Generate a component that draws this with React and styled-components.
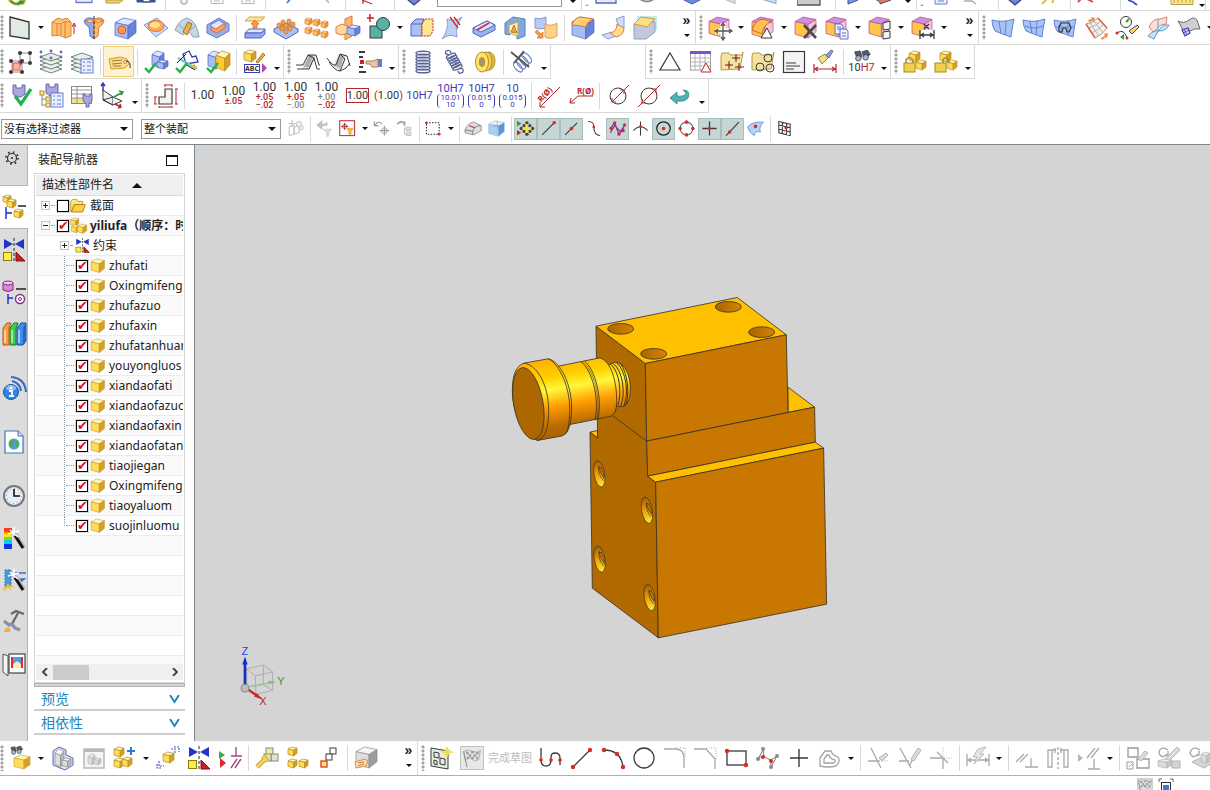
import React from 'react';
import styled, { createGlobalStyle, css } from 'styled-components';

const GlobalStyle = createGlobalStyle`
  * { box-sizing: border-box; }
  body {
    margin: 0;
    background: #fff;
    color: #222;
    font: 12px/16px 'Noto Sans', 'Noto Sans CJK SC', sans-serif;
  }
  button, select, input { font: inherit; color: inherit; margin: 0; }
`;

/* ---------- drawing helpers ---------- */

const GOLD = { top: '#fff6bd', front: '#ffdc58', side: '#d8a020', line: '#b88c24' };
const BLUE = { top: '#dbe6ff', front: '#a5bdf5', side: '#6486da', line: '#5763bc' };
const GREY = { top: '#f6f6f6', front: '#dedede', side: '#b9b9b9', line: '#8c8c8c' };
const PALE = { top: '#ececec', front: '#dcdcdc', side: '#c6c6c6', line: '#b4b4b4' };
const ORANGE = { top: '#ffe2b0', front: '#ffc35c', side: '#f2983a', line: '#e07a35' };
const PURPLE = { top: '#cf8fe0', front: '#ffc648', side: '#f6c6d8', line: '#b8489a' };
const RED = '#b3262c';
const INK = '#3a3a3a';
const MUTE = '#a9a9a9';
const DOT = '#dc2a20';
const NAVY = '#3a3ab8';

const L = ({ d, c = INK, f = 'none', w = 1, dash }) => (
  <path d={d} stroke={c} fill={f} strokeWidth={w} strokeDasharray={dash} />
);

const Cube = ({ x, y, s, h = s, p = GOLD }) => {
  const pt = (...list) =>
    list.map(([a, b]) => `${x + a * s},${y + b * h}`).join(' ');
  return (
    <g stroke={p.line} strokeWidth="0.7" strokeLinejoin="round">
      <polygon fill={p.top} points={pt([0, 0.22], [0.4, 0], [1, 0.12], [0.62, 0.36])} />
      <polygon fill={p.front} points={pt([0, 0.22], [0.62, 0.36], [0.62, 1], [0, 0.82])} />
      <polygon fill={p.side} points={pt([0.62, 0.36], [1, 0.12], [1, 0.7], [0.62, 1])} />
    </g>
  );
};

const Dots = ({ at, r = 1.8, c = DOT }) =>
  at.map(([x, y]) => <circle key={`${x}-${y}`} cx={x} cy={y} r={r} fill={c} />);

const Check = ({ x = 0, y = 0 }) => (
  <path
    transform={`translate(${x} ${y})`}
    d="M0 5 L4 9 L11 0"
    fill="none"
    stroke="#27ae45"
    strokeWidth="2.4"
  />
);

const Binoculars = () => (
  <g stroke="#333" strokeWidth="0.8">
    <path d="M4 2 L10 1 L12 7 L7 10Z M12 2 L18 0 L21 5 L14 8Z" fill="#555c68" />
    <circle cx="8" cy="9" r="3" fill="#9fb6dd" />
    <circle cx="16" cy="8" r="3" fill="#9fb6dd" />
  </g>
);

const Wand = () => (
  <g>
    <path d="M13 8 L22 22" stroke="#bbb" strokeWidth="4.5" />
    <path d="M12 8 L21 22" stroke="#111" strokeWidth="3" />
    <path d="M8 4 L16 11 M12 1 L12 10 M6 8 L17 5" stroke="#fff" strokeWidth="1.6" />
  </g>
);

const Mates = () => (
  <g>
    <path d="M2 1 L11 6 L2 11Z M22 1 L13 6 L22 11Z" fill="#2334c8" />
    <path d="M12 0 V24" stroke="#222" strokeDasharray="3 2" />
    <rect x="1.5" y="14.5" width="8" height="8" fill="#ffee4a" stroke="#8a7a10" />
    <path d="M14 14 L23 23 H14Z" fill="#cc2020" stroke="#7c1010" />
  </g>
);

const Surface = ({ children }) => (
  <g>
    <path d="M1 4 Q12 7 23 3 Q21 12 20 21 Q11 18 4 15 Q1 10 1 4Z" fill="#a9c3f5" stroke="#5f84d4" />
    {children}
  </g>
);

const Layers = () =>
  [19, 15, 11, 7].map((y) => (
    <path
      key={y}
      d={`M1 ${y} L12 ${y - 4} L23 ${y} L12 ${y + 4}Z`}
      fill="#e6efe8"
      stroke="#66786c"
      strokeWidth="0.9"
    />
  ));

const Note = ({ x, y }) => (
  <g transform={`translate(${x} ${y})`} stroke="#5a72cc" strokeWidth="0.9">
    <rect width="12" height="14" fill="#e8efff" />
    <path d="M2 3 H4 M6 3 H10 M2 7 H4 M6 7 H10 M2 11 H4 M6 11 H10" />
  </g>
);

const Pages = ({ x, y }) => (
  <g transform={`translate(${x} ${y})`} stroke="#4a62c4" strokeWidth="0.9" fill="#eef3ff">
    <path d="M0 0 H6 L8 2 V10 H0Z M2 3 H6 M2 5 H6" />
    <path d="M5 5 H11 L13 7 V15 H5Z M7 9 H11 M7 12 H11" />
  </g>
);

const Bolt = () => (
  <path d="M5 1 H8 V4 H14 V1 H17 V10 L13 13 H9 L5 10Z" fill="#a9a8dd" stroke="#6a66b4" />
);

const Fold = () => (
  <path d="M1 6 L2 3 H9 L10 5 H22 L23 2 L20 19 L1 20Z" fill="#f6e2a0" stroke="#b49a48" />
);

const Flag = () => (
  <g>
    <path d="M2 4 Q8 1 13 4 T22 3 L20 14 Q15 17 11 13 T4 15Z" fill="#e4e4e4" stroke="#a4a4a4" />
    <path
      d="M5 6 H8 M11 5 H14 M17 6 H20 M8 9 H11 M14 9 H17 M6 12 H8 M11 12 H14 M17 12 H19"
      stroke="#999"
      strokeWidth="3"
    />
    <path d="M2 4 L6 23" stroke="#999" strokeWidth="1.5" />
  </g>
);

const icons = {
  plane: <L d="M2 1 L21 6 V23 L2 20Z" f="#e2ebe2" c="#333" w={1.3} />,
  extrude: (
    <g>
      <L d="M1 6 L7 2 Q11 5 16 2 L20 6 V20 L14 22 Q9 18 1 20Z" f="#ffc067" c="#dd8038" />
      <L d="M1 6 Q9 9 13 6 L20 6" f="#ffe0a6" c="#dd8038" />
      <L d="M6 8 V20 M10 8 V19 M14 6 V21" c="#dd8038" />
      <L d="M23 18 V8 M21 11 L23 7 L25 11" c={RED} />
    </g>
  ),
  revolve: (
    <g>
      <L d="M12 3 Q5 0 2 5 Q3 9 7 11 L8 20 L12 23Z" f="#8eaaf0" c="#5f74c8" />
      <L d="M12 3 Q20 0 22 5 Q21 9 17 11 L16 20 L12 23Z" f="#ffb763" c="#d87838" />
      <L d="M3 5 Q8 2 12 5 Q17 2 21 5 Q17 7 12 6 Q7 7 3 5Z" f="#ffe0a6" c="#d87838" />
      <L d="M12 0 V24" c="#333" dash="3 2" />
    </g>
  ),
  block: (
    <g>
      <Cube x={2} y={2} s={21} p={BLUE} />
      <circle cx="9" cy="14" r="4" fill="#ff9a48" stroke="#d05a28" />
    </g>
  ),
  emboss: (
    <g>
      <L d="M0 9 L13 2 L24 12 L12 21Z" f="#c8dcff" c="#7a9ad8" />
      <ellipse cx="12" cy="10" rx="8" ry="5.5" fill="#ffa75a" stroke="#e07a35" />
      <ellipse cx="11" cy="9" rx="5" ry="3" fill="#ffe48a" />
    </g>
  ),
  sheet: (
    <g>
      <L d="M0 14 Q4 4 12 2 Q22 5 24 21 L18 21 Q13 12 8 19Z" f="#c7d6e4" c="#8fa0b0" />
      <L d="M13 6 L17 8 L12 19 L8 16Z" f="#f0b348" c="#9a6c24" />
      <L d="M4 9 L10 14 M20 10 L15 14" c="#8fa0b0" />
    </g>
  ),
  shell: (
    <g>
      <L d="M1 9 L13 2 L23 8 V15 L11 22 L1 17Z" f="#93b0ee" c="#5f7acc" />
      <L d="M4 9 L13 4 L20 9 L11 15Z" f="#dce6ff" c="#5f7acc" />
      <L d="M5 11 L10 13 L19 7 V12 L11 17 L5 14Z" f="#ffa25a" c="#e06a35" />
    </g>
  ),
  offsetFace: (
    <g>
      <L d="M6 1 H22 L18 5 H2Z" f="#ffe48c" c="#d0a848" />
      <path d="M10 12 V8 H8 L12 4 L16 8 H14 V12Z" fill="#ff9b3c" stroke="#d86a28" strokeWidth="0.8" />
      <L d="M6 13 H22 L18 17 H2Z" f="#dbe6ff" c={BLUE.line} />
      <L d="M2 17 H18 L22 13 V18 L18 22 H2Z" f="#8fa9f0" c={BLUE.line} />
    </g>
  ),
  pattern: (
    <g>
      <L d="M0 13 L12 7 L24 13 V16 L12 23 L0 16Z" f="#a9c0f5" c={BLUE.line} />
      {[[8, 6], [14, 5], [4, 9], [11, 9], [18, 8], [7, 12], [15, 12], [11, 15]].map(([x, y]) => (
        <rect key={`${x}-${y}`} x={x - 1} y={y - 2} width="4" height="5" rx="2" fill="#f5a04a" stroke="#c0702a" strokeWidth="0.7" />
      ))}
    </g>
  ),
  geometryPattern: (
    <g>
      {[[0, 2], [8, 3], [16, 5], [0, 11], [8, 13], [16, 15]].map(([x, y]) => (
        <Cube key={`${x}-${y}`} x={x} y={y} s={7} p={ORANGE} />
      ))}
    </g>
  ),
  unite: (
    <g>
      <L d="M9 3 L16 0 V20 L9 24Z" f="#ffb767" c="#e07a35" />
      <L d="M0 11 L6 8 L12 10 V17 L5 19 L0 17Z" f="#ffd9a0" c="#e07a35" />
      <Cube x={11} y={9} s={13} h={11} p={BLUE} />
    </g>
  ),
  combine: (
    <g>
      <rect x="3" y="10" width="12" height="12" fill="#56b3a4" stroke={INK} />
      <circle cx="16" cy="8" r="6.5" fill="#56b3a4" stroke={INK} />
      <L d="M0 2 H7 M3 -2 V6" c="#d02020" w={1.5} />
    </g>
  ),
  replaceFace: (
    <g>
      <L d="M1 8 L6 3 H14 L12 8 V20 H1Z" f="#a9c0f5" c={BLUE.line} />
      <L d="M12 8 L15 3 H23 V15 L20 20 H12Z" f="#fde88e" c="#d02020" dash="2 1" />
      <L d="M1 8 H12" c={BLUE.line} />
    </g>
  ),
  trimSheet: (
    <g>
      <L d="M6 3 Q14 6 21 1 Q14 10 16 21 Q8 17 1 23 Q8 14 6 3Z" f="#bcd0f8" c="#84a0d8" />
      <L d="M9 1 L17 12 M13 1 L19 9" c="#d02828" w={1.3} />
    </g>
  ),
  splitBody: (
    <g>
      <L d="M1 12 L15 5 L23 9 V14 L9 21 L1 17Z" f="#9ab4f0" c={BLUE.line} />
      <L d="M1 12 L15 5 L23 9 L9 16Z" f="#dbe6ff" c={BLUE.line} />
      <L d="M17 7 L5 14" c="#d02828" w={1.5} />
    </g>
  ),
  wave: (
    <g>
      <L d="M2 7 L10 1 L22 3 V20 L14 23 V15 H7 V19 L2 18Z" f="#7faade" c="#5a80b4" />
      <L d="M6 9 L15 6 V20 L6 17Z" f="#fff0bd" c="#d0a048" />
      <L d="M8 16 L11 9 L14 17Z" f="#e7a43c" c="#b88030" />
    </g>
  ),
  copyFace: (
    <g>
      <L d="M1 2 Q6 4 12 1 V12 Q6 14 1 12Z" f="#b6caf7" c="#8098d4" />
      <L d="M11 8 Q17 11 23 7 V20 Q17 24 11 21Z" f="#ffd384" c="#e0a050" />
      <path d="M3 14 L7 18 L9 16 V22 H3 L5 20 L1 16Z" fill="#ff9b3c" stroke="#d86a28" strokeWidth="0.7" />
    </g>
  ),
  edgeBlend: (
    <g>
      <Cube x={1} y={1} s={22} p={BLUE} />
      <L d="M1 9 Q3 2 9 1 L23 3 Q16 5 15 11 Q8 9 1 9Z" f="#ffd070" c="#d87838" />
    </g>
  ),
  faceBlend: (
    <g>
      <L d="M14 3 L22 0 V12 L18 14Z" f="#c8dcff" c="#84a0d8" />
      <L d="M0 19 L10 16 L14 20 L6 23Z" f="#c8dcff" c="#84a0d8" />
      <L d="M15 8 Q15 16 8 17 L14 21 Q22 19 22 12Z" f="#ffe08a" c="#e07a45" />
    </g>
  ),
  chamfer: (
    <g>
      <rect x="4" y="0" width="20" height="14" fill="#b8f0f0" />
      <L d="M1 8 L8 5 L22 6 V16 L13 23 H1Z" f="#bfc9da" c="#94a0b8" />
      <L d="M1 8 L8 1 L22 3 L14 11Z" f="#ffdd80" c="#dd9048" />
    </g>
  ),
  moveFace: (
    <g>
      <Cube x={1} y={1} s={20} p={PURPLE} />
      <path d="M15 7 V23 M7 15 H23" stroke="#fff" strokeWidth="5" />
      <L d="M15 7 V23 M7 15 H23 M13 10 L15 7 L17 10 M13 21 L15 24 L17 21 M10 13 L7 15 L10 17 M21 13 L24 15 L21 17" c="#555" w={1.3} />
    </g>
  ),
  resizeBlend: (
    <g>
      <Cube x={1} y={1} s={21} p={PURPLE} />
      <L d="M1 14 Q4 4 12 3 L21 6 Q13 7 11 18Z" f="#ffc250" c="#d0603a" />
      <L d="M10 22 L16 12 L21 22Z" f="#fff" />
    </g>
  ),
  deleteFace: (
    <g>
      <Cube x={1} y={1} s={21} p={PURPLE} />
      <L d="M10 9 L22 22 M22 9 L10 22" w={2.6} c="#4a4a4a" />
    </g>
  ),
  copyCube: (
    <g>
      <Cube x={1} y={1} s={20} p={PURPLE} />
      <Pages x={10} y={8} />
    </g>
  ),
  groupFace: (
    <g>
      <Cube x={1} y={1} s={20} p={PURPLE} />
      <L d="M15 7 L22 5 V13 L15 14Z M15 16 L22 15 V22 L15 23Z" f="#f4f4f4" />
    </g>
  ),
  linearDim: (
    <g>
      <Cube x={1} y={1} s={20} p={PURPLE} />
      <path d="M9 14 H24 V24 H9Z" fill="#fff" />
      <L d="M9 14 V23 M23 14 V23 M10 19 H22 M13 17 L10 19 L13 21 M19 17 L22 19 L19 21 M13 8 L18 13 M18 8 L13 13" w={1.3} />
    </g>
  ),
  surf1: (
    <Surface>
      <L d="M8 5 Q9 12 10 17 M15 5 Q15 12 14 19" c="#5f84d4" />
    </Surface>
  ),
  surf2: (
    <Surface>
      <L d="M8 5 Q9 12 10 17 M15 5 Q15 12 14 19 M3 10 Q12 14 21 10" c="#5f84d4" />
    </Surface>
  ),
  surf3: (
    <Surface>
      <L d="M8 5 V18 M15 4 V19 M3 11 H21" c="#5f84d4" w={0.8} />
      <L d="M8 7 H16 L18 12 L16 16 H14 L13 12 H10 L9 16 H6 V11Z" c="#333" w={1.2} />
    </Surface>
  ),
  mesh: (
    <g>
      <L d="M2 8 Q9 7 14 2 L23 12 Q18 19 11 22Z" f="#f4efe8" c="#9a9a9a" />
      <L d="M5 12 Q12 10 17 5 M8 17 Q14 14 20 8 M6 7 L15 20 M10 5 L19 17" c="#a8a8a8" w={0.9} />
      <L d="M2 8 L11 22 M14 2 L23 12" c="#e0603a" w={1.4} />
      <path d="M4 4 L8 3 L7 1 L11 2 L9 6 L8 5 L5 6Z M17 22 L21 20 L20 18 L24 17 L23 22 L22 21 L18 24Z" fill="#f08838" />
    </g>
  ),
  curveLink: (
    <g>
      <circle cx="11" cy="6" r="5.5" fill="none" stroke={INK} />
      <L d="M11 6 L14 3" c="#2a9a3a" w={2} />
      <L d="M2 17 Q9 12 12 22" />
      <Dots at={[[2, 17], [12, 22]]} r={1.5} />
      <L d="M14 15 L22 9 L24 11 L17 18Z" f="#ffdc58" c={NAVY} />
      <path d="M5 21 L9 18 V24Z" fill="#2a9a3a" />
    </g>
  ),
  crossSurf: (
    <g>
      <L d="M3 11 Q7 2 14 3 L21 1 L20 8 Q12 8 8 17Z" f="#f9dede" c="#e07a74" />
      <L d="M2 20 Q8 13 14 15 Q20 15 23 9 L18 9 Q13 12 8 23Z" f="#c8e2f4" c="#5f94d0" />
      <L d="M12 3 V16" c="#4fb0a0" />
    </g>
  ),
  quilt: (
    <g>
      <L d="M1 5 Q7 8 12 4 Q17 0 20 4 L23 13 Q17 12 13 15 Q8 18 6 14Z" f="#cfcfcf" c="#6a6a6a" />
      <L d="M5 14 L11 12 L13 17 L8 20Z" f="#cfd8ff" c={NAVY} w={1.2} />
      <L d="M7 13 L10 19 M6 17 L12 14" c={NAVY} w={0.8} />
    </g>
  ),
  selGroup: (
    <g>
      <L d="M12 3 H22 V13 H12Z M4 11 H14 V22 H4Z" c="#8b8b8b" />
      <Dots at={[[12, 3], [22, 3], [22, 13], [12, 13], [3, 11], [14, 11], [14, 22], [3, 22]]} r={2} c={INK} />
      <rect x="5" y="13" width="7" height="7" fill="#ffb0a0" stroke="#e05040" />
    </g>
  ),
  layers: (
    <g>
      <Layers />
      <Dots at={[[2, 2], [12, 1], [22, 2], [12, 8], [2, 7], [22, 7]]} r={1.4} c="#6a66b4" />
    </g>
  ),
  layersList: (
    <g>
      <Layers />
      <Note x={11} y={9} />
    </g>
  ),
  tag: (
    <g>
      <L d="M2 9 L13 7 L20 9 L22 14 L18 18 L4 19Z" f="#ffdd84" c="#d09a38" />
      <L d="M5 11 L15 10 M5 14 L15 13 M6 16 L14 16" c="#9a7a38" />
      <circle cx="18" cy="12" r="1.5" fill="#fff" stroke="#9a7a38" strokeWidth="0.8" />
      <L d="M19 11 Q24 11 23 18" c="#333" />
    </g>
  ),
  checkBlue: (
    <g>
      <Cube x={8} y={1} s={12} h={17} p={BLUE} />
      <Cube x={13} y={10} s={11} h={9} p={BLUE} />
      <Check x={1} y={13} />
    </g>
  ),
  checkSketch: (
    <g>
      <L d="M8 4 L14 1 L17 7 L21 6 L23 12 L11 14Z" c={NAVY} w={1.3} />
      <L d="M3 8 L22 19" c="#75c9c6" w={2.5} />
      <L d="M2 13 L11 4 M10 14 L20 20" c="#222" />
      <L d="M18 15 L21 18" c="#f0b030" w={3} />
      <Check x={1} y={13} />
    </g>
  ),
  checkBody: (
    <g>
      <Cube x={2} y={1} s={13} h={18} p={BLUE} />
      <Cube x={10} y={1} s={14} h={20} p={{ ...GOLD, front: '#ffc935' }} />
      <Check x={1} y={13} />
    </g>
  ),
  abc: (
    <g>
      <Cube x={1} y={0} s={12} />
      <L d="M13 12 L20 3 L22 5 L15 13Z" f="#f0b030" c="#8a5c14" w={0.8} />
      <rect x="1.5" y="14.5" width="15" height="8" fill="#fff" stroke={NAVY} />
      <text x="9" y="21" textAnchor="middle" fontSize="7" fontWeight="700" fill="#333">ABC</text>
      <path d="M19 13 L24 18 L19 23Z" fill="#b346b8" />
    </g>
  ),
  bridge1: (
    <g>
      <path d="M6 19 L12 5 L20 5 L14 19Z" fill="#dadada" />
      <path d="M8 17 L13 5 L17 6 L13 17Z" fill="#aeaeae" />
      <L d="M0 15 H7 L12 5 H20 L23 15 H24 M1 19 H13 L18 8 L21 19 H24 M12 5 L18 8" />
    </g>
  ),
  bridge2: (
    <g>
      <path d="M6 17 L12 4 L19 5 L13 20Z" fill="#dadada" />
      <path d="M9 16 L13 5 L17 7 L13 18Z" fill="#aeaeae" />
      <L d="M0 8 Q5 16 9 15 L13 4 L20 6 L23 16 M2 12 Q8 21 13 21 Q20 19 23 13 M13 21 L18 9 M13 4 L18 9" />
    </g>
  ),
  pointList: (
    <g>
      <L d="M1 2 H7 M1 7 H5 M1 17 H5 M1 22 H8" w={2} />
      <rect x="2" y="10" width="4" height="4" fill="#d02020" />
      <L d="M8 11 H15 L20 9 V17 H14 L12 14 H8Z" f="#f2c69a" c="#b08060" />
      <rect x="20" y="9" width="4" height="8" fill="#6a7cc4" />
    </g>
  ),
  coil: (
    <g fill="none" stroke="#5a6494" strokeWidth="1.5">
      {[3, 6, 9, 12, 15, 18, 21].map((y) => (
        <ellipse key={y} cx="12" cy={y} rx="7" ry="1.8" />
      ))}
    </g>
  ),
  tension: (
    <g fill="none" stroke="#5a6494" strokeWidth="1.3">
      {[0, 1, 2, 3, 4, 5].map((i) => (
        <ellipse key={i} cx={9 + i * 1.3} cy={6 + i * 2.3} rx="5" ry="1.8" transform={`rotate(-25 ${9 + i * 1.3} ${6 + i * 2.3})`} />
      ))}
      <path d="M7 5 Q2 4 4 1 Q8 -1 9 3 M17 19 Q22 17 21 22 Q17 25 16 21" />
    </g>
  ),
  wheel: (
    <g stroke="#b08c28">
      <ellipse cx="16" cy="11" rx="6" ry="9" fill="#e6bc3c" />
      <ellipse cx="13" cy="11.5" rx="6" ry="9.5" fill="#f3cf4c" />
      <ellipse cx="9" cy="12" rx="6.5" ry="10" fill="#ffe46e" />
      <ellipse cx="9" cy="12" rx="2.5" ry="4.5" fill="#a8986a" />
    </g>
  ),
  cutCoil: (
    <g fill="none">
      {[0, 1, 2, 3].map((i) => (
        <ellipse key={i} cx={8 + i * 3} cy={17 - i * 3} rx="3" ry="6" stroke="#6f88c4" strokeWidth="1.3" transform={`rotate(-40 ${8 + i * 3} ${17 - i * 3})`} />
      ))}
      <path d="M1 2 L19 17 M14 1 L4 13" stroke="#555" strokeWidth="1.8" />
    </g>
  ),
  triangle: <L d="M12 3 L22 20 H2Z" w={1.2} />,
  tableTri: (
    <g>
      <rect x="1.5" y="2" width="20" height="18" fill="#fff" stroke="#9c9c9c" />
      <L d="M1 8 H22 M1 12 H22 M1 16 H22 M6 4 V20 M11 4 V20 M16 4 V20" c="#ababab" w={0.9} />
      <rect x="1" y="1" width="21" height="3" fill="#7b52cc" />
      <L d="M17 13 L22 22 H12Z" c="#d02020" f="#fff" />
    </g>
  ),
  folderPts: (
    <g>
      <Fold />
      <L d="M16 4 V12 M12 8 H20 M9 11 V19 M5 15 H13 M19 13 V21 M15 17 H24" />
      <Dots at={[[16, 8], [9, 15], [19, 17]]} r={1.5} />
    </g>
  ),
  folderRings: (
    <g fill="none" stroke={INK}>
      <Fold />
      <circle cx="17" cy="8" r="4" />
      <circle cx="9" cy="17" r="4" />
      <circle cx="19" cy="18" r="4" />
    </g>
  ),
  noteBox: (
    <g>
      <rect x="1.5" y="1.5" width="21" height="21" fill="#f4f4f4" stroke={INK} strokeWidth="1.2" />
      <L d="M4 13 H14 M4 16 H18 M4 19 H12" />
    </g>
  ),
  brushDim: (
    <g>
      <L d="M5 8 L12 4 L15 8 L9 14Z" f="#f0dc8a" c="#9a8a48" />
      <L d="M13 5 L18 0 L20 1 L16 8Z" f="#8fa2d0" c="#6474a4" />
      <L d="M1 14 V23 M23 14 V23 M2 19 H22 M5 17 L2 19 L5 21 M19 17 L22 19 L19 21" c={RED} w={1.2} />
    </g>
  ),
  locks1: (
    <g>
      <Cube x={6} y={1} s={11} />
      <Cube x={13} y={10} s={10} />
      <rect x="1" y="13" width="11" height="9" fill="#f0d04c" stroke="#a08c24" />
      <L d="M3 13 V10 Q6 5 10 10 V13" c="#a08c34" w={1.6} />
    </g>
  ),
  locks2: (
    <g>
      <Cube x={6} y={1} s={11} />
      <Cube x={13} y={10} s={10} />
      <rect x="1" y="13" width="11" height="9" fill="#f0d04c" stroke="#a08c24" />
      <L d="M9 13 V10 Q12 5 15 10 V13" c="#a08c34" w={1.6} />
    </g>
  ),
  pmiCheck: (
    <g>
      <Bolt />
      <L d="M7 12 L13 20 L23 5" c="#23b14d" w={3.2} />
    </g>
  ),
  pmiTree: (
    <g>
      <g transform="translate(2 -1)">
        <Bolt />
      </g>
      <L d="M3 10 V22 M3 15 H8 M3 21 H8" c="#888" />
      <rect x="1" y="7" width="4" height="4" fill="#ffe98c" stroke="#b88c24" />
      <rect x="7" y="13" width="4" height="4" fill="#ffe98c" stroke="#b88c24" />
      <rect x="7" y="19" width="4" height="4" fill="#ffe98c" stroke="#b88c24" />
      <Note x={12} y={9} />
    </g>
  ),
  pmiTable: (
    <g>
      <rect x="1.5" y="2.5" width="20" height="17" fill="#fff" stroke="#888" />
      <path d="M2 14 H14 V19 H2Z" fill="#f5e58e" />
      <L d="M1 6 H22 M1 10 H22 M1 14 H22 M7 2 V20" c="#888" w={0.9} />
      <L d="M13 10 H15 V12 H20 V10 H22 V17 L19 19 V23 H16 V19 L13 17Z" f="#a9a8dd" c="#6a66b4" />
    </g>
  ),
  csys: (
    <g>
      <L d="M2 6 L12 13 V21 L2 16Z" f="#eef2ee" />
      <L d="M12 13 L21 17 L12 21 M2 16 L12 13 M12 21 L2 16" f="#eef2ee" />
      <L d="M2 7 V0 M0 2 L2 -1 L4 2" c={NAVY} w={1.5} />
      <L d="M13 13 L22 8 M18 7 L22 8 L20 11" c="#1f9a44" w={1.5} />
      <L d="M14 20 L20 23 M17 24 L20 23 L19 20" c={RED} w={1.5} />
    </g>
  ),
  profile: (
    <g>
      <path d="M5 20 V13 H11 V5 H18 V20Z" fill="#f4f4f4" stroke={INK} strokeWidth="1.2" />
      <L d="M11 1 H18 M11 0 V3 M18 0 V3 M1 13 V20 M0 13 H3 M0 20 H3 M22 5 V20 M21 5 H24 M21 20 H24 M5 23 H18 M5 22 V24 M18 22 V24" c={RED} />
    </g>
  ),
  radius1: (
    <g>
      <L d="M22 3 L2 23 M2 18 V23 H7" c={RED} />
      <text x="8" y="12" fontSize="8" fontWeight="700" fill={RED} textAnchor="middle" transform="rotate(-45 9 11)">R(Ø)</text>
    </g>
  ),
  radius2: (
    <g>
      <L d="M24 12 H9 L1 19 M2 14 L1 19 L6 19" c={RED} />
      <text x="8" y="10" fontSize="8" fontWeight="700" fill={RED}>R(Ø)</text>
    </g>
  ),
  dia1: (
    <g>
      <circle cx="12" cy="12" r="8" fill="none" stroke={INK} />
      <L d="M23 1 L6 18 M6 14 V18 H10 M18 10 V6 H14" c={RED} />
    </g>
  ),
  dia2: (
    <g>
      <circle cx="12" cy="12" r="8" fill="none" stroke={INK} />
      <L d="M23 1 L1 23 M5 15 V19 H9 M19 9 V5 H15" c={RED} />
    </g>
  ),
  back: (
    <path d="M2 14 L9 8 V12 Q17 13 18 9 L15 6 Q23 6 20 14 Q17 18 9 17 V20Z" fill="#4fb0b0" stroke="#30888a" strokeWidth="0.8" />
  ),

  /* selection bar */
  selCube: (
    <g>
      <L d="M3 10 L10 7 V20 L3 22Z M10 10 L17 8 V18 L10 20Z M7 0 V10 M2 5 H12" c="#b8b8b8" w={1.3} />
      <circle cx="17" cy="6" r="4" stroke="#b8b8b8" fill="#eee" />
      <circle cx="20" cy="11" r="3" stroke="#b8b8b8" fill="#eee" />
    </g>
  ),
  filterBack: (
    <g>
      <L d="M2 7 L8 2 V12Z M8 7 H15 V3" c="#bbb" f="#ccc" w={2} />
      <L d="M10 13 H22 L18 18 V23 H15 V18Z" c="#ccc" f="#ddd" />
    </g>
  ),
  filterBox: (
    <g>
      <rect x="1" y="1" width="21" height="21" fill="#fff" stroke="#c4303a" strokeWidth="1.5" />
      <L d="M8 4 V14 M3 9 H13" c={RED} w={1.3} />
      <circle cx="8" cy="9" r="3" fill="none" stroke={RED} />
      <L d="M11 12 H20 L17 16 V20 H14 V16Z" c="#d8a020" f="#f0b848" />
    </g>
  ),
  targetBack: (
    <g>
      <L d="M3 7 Q8 0 13 6 M2 2 V8 H8" c="#999" w={1.6} />
      <circle cx="16" cy="15" r="4" fill="none" stroke="#888" w={1.3} />
      <L d="M16 8 V22 M9 15 H23" c="#888" w={1.3} />
    </g>
  ),
  treeBack: (
    <g>
      <L d="M2 6 Q6 0 12 5 M12 2 V8" c="#aaa" w={3} />
      <L d="M12 10 V20 H16 M12 13 H16" c="#bbb" w={1.3} />
      <rect x="15" y="10" width="6" height="5" fill="#ddd" stroke="#bbb" />
      <rect x="15" y="17" width="6" height="5" fill="#ddd" stroke="#bbb" />
    </g>
  ),
  marquee: (
    <g>
      <rect x="2" y="4" width="18" height="16" fill="none" stroke="#222" strokeWidth="1.5" strokeDasharray="2 2" />
      <Dots at={[[2, 4], [20, 20]]} r={2} />
    </g>
  ),
  shadeTop: (
    <g>
      <L d="M0 14 Q4 4 12 3 L23 8 V15 L12 21 L0 18Z" f="#e0e0e0" c="#777" />
      <L d="M0 14 L11 16 Q13 8 22 8 M11 16 V21" c="#777" w={1.3} />
      <L d="M6 8 L14 11" c="#d02020" w={1.6} />
    </g>
  ),
  glass: (
    <g>
      <Cube x={1} y={1} s={22} p={{ top: '#dff2ff', front: '#a5d0f5', side: '#5a96dc', line: '#8ab0dc' }} />
      <L d="M13 2 V12 M7 8 H19" c="#e06060" dash="2 1" />
    </g>
  ),
  snapAll: (
    <g>
      <path d="M0 1 L6 5 L0 9Z" fill="#2a9a3a" />
      <path d="M0 14 L6 18 L0 22Z" fill="#d02020" />
      <Dots at={[[14, 4], [22, 12], [14, 20], [6, 12], [10, 8], [18, 8], [10, 16], [18, 16]]} r={2.4} c="#444" />
      <Dots at={[[14, 8], [18, 12], [14, 16], [10, 12], [14, 12]]} r={2.2} c="#f0e43c" />
    </g>
  ),
  snapEnd: (
    <g>
      <L d="M3 21 L20 4" w={1.6} />
      <Dots at={[[20, 4]]} r={2.5} />
    </g>
  ),
  snapMid: (
    <g>
      <L d="M3 21 L20 4" w={1.6} />
      <Dots at={[[12, 12]]} r={2.5} />
    </g>
  ),
  snapCurve: (
    <g>
      <L d="M3 2 Q12 2 11 11 Q12 22 20 22" w={1.5} />
      <Dots at={[[11, 10]]} r={2} />
    </g>
  ),
  snapPoly: (
    <g>
      <L d="M2 12 L8 4 L14 20 L21 12 M2 18 L8 8 L16 16 L22 8" c="#8232a8" w={1.8} />
      <Dots at={[[3, 12], [8, 4], [14, 20], [22, 7], [20, 15]]} r={2.3} />
    </g>
  ),
  snapCross: (
    <g>
      <L d="M2 15 Q12 4 22 15 M12 2 V22" w={1.5} />
      <Dots at={[[12, 9]]} r={2} />
    </g>
  ),
  snapCenter: (
    <g>
      <circle cx="12" cy="12" r="9.5" fill="none" stroke="#222" strokeWidth="1.8" />
      <Dots at={[[12, 12]]} r={2.5} />
    </g>
  ),
  snapQuad: (
    <g>
      <circle cx="12" cy="12" r="9" fill="none" stroke="#666" strokeWidth="1.5" />
      <Dots at={[[12, 3], [12, 21], [3, 12], [21, 12]]} r={2.5} />
    </g>
  ),
  snapPoint: (
    <g>
      <L d="M12 2 V22 M2 12 H22" w={1.8} />
      <Dots at={[[12, 12]]} r={2} />
    </g>
  ),
  snapOn: (
    <g>
      <L d="M3 22 L21 3" w={1.6} />
      <Dots at={[[8, 17]]} r={2.5} />
    </g>
  ),
  snapFace: (
    <g>
      <L d="M1 10 Q6 2 23 3 Q16 10 19 17 Q12 14 10 22 Q3 18 1 10Z" f="#b4d2f5" c="#6b98d0" w={1.3} />
      <Dots at={[[12, 9]]} r={2.5} />
    </g>
  ),
  grid: (
    <g>
      <L d="M4 2 L20 6 V22 L4 18Z M9 3 V19 M15 5 V21 M4 7 L20 11 M4 13 L20 17" w={1.5} />
      <Dots at={[[14, 11]]} r={2.2} />
    </g>
  ),

  /* resource rail */
  gear: (
    <g fill="none" stroke="#333">
      <circle cx="12" cy="12" r="6" strokeWidth="1.6" />
      <circle cx="12" cy="12" r="8" strokeWidth="2.4" strokeDasharray="2.2 4.1" />
      <circle cx="12" cy="12" r="1" fill="#333" />
    </g>
  ),
  assembly: (
    <g>
      <Cube x={1} y={0} s={8} />
      <Cube x={5} y={4} s={9} />
      <L d="M16 11 H24" c="#111" w={1.4} />
      <L d="M4 12 V24 M4 18 H10" c="#1a28c0" w={1.4} />
      <Cube x={12} y={14} s={9} />
    </g>
  ),
  constraints: <Mates />,
  partNav: (
    <g>
      <path d="M1 3 V10 Q6 13 11 10 V3" fill="#d68ad0" stroke="#8a2a86" />
      <ellipse cx="6" cy="3" rx="5" ry="2" fill="#f2c8ee" stroke="#8a2a86" />
      <L d="M14 9 H24" c="#111" w={1.4} />
      <L d="M6 14 V24 M6 18 H11" c="#1a28c0" w={1.4} />
      <circle cx="18" cy="19" r="4.5" fill="#fff" stroke="#8a2a86" strokeWidth="1.4" />
      <circle cx="18" cy="19" r="1.5" fill="#fff" stroke="#8a2a86" />
    </g>
  ),
  reuse: (
    <g strokeLinejoin="round">
      <path d="M1 6 L5 1 H9 L7 6 V23 H1Z" fill="#ff9a3c" stroke="#a85a14" />
      <path d="M8 6 L12 1 H16 L14 6 V23 H8Z" fill="#3fcf4c" stroke="#1a7a28" />
      <path d="M15 6 L19 1 H24 V19 L21 23 H15Z" fill="#3c8cf0" stroke="#1a4a9c" />
      <path d="M21 6 L24 1 V19 L21 23Z" fill="#2a62b4" />
      <path d="M3 8 V21 M10 8 V21 M17 8 V21" stroke="#ffffffaa" strokeWidth="1.5" />
    </g>
  ),
  info: (
    <g>
      <circle cx="9" cy="16" r="7.5" fill="#2f83e4" stroke="#1c559c" />
      <ellipse cx="9" cy="12" rx="5" ry="3" fill="#8fc0f5" />
      <circle cx="9" cy="12" r="1.4" fill="#fff" />
      <path d="M7 15 H10 V20 M7 20 H12" stroke="#fff" strokeWidth="1.8" fill="none" />
      <path d="M9 1 Q23 2 24 16 M10 5 Q18 7 19 15" stroke="#3a68c4" strokeWidth="2.2" fill="none" />
    </g>
  ),
  webPage: (
    <g>
      <path d="M3 1 H16 L21 6 V23 H3Z" fill="#fff" stroke="#3c72b8" strokeWidth="1.2" />
      <path d="M16 1 V6 H21" fill="#cfe0f5" stroke="#3c72b8" />
      <circle cx="12" cy="14" r="5.5" fill="#5a96dc" />
      <path d="M8 10 Q13 8 12 12 L9 18 Q6 15 8 10Z M14 12 L17 12 Q17 17 14 18Z" fill="#45b04a" />
    </g>
  ),
  clock: (
    <g>
      <circle cx="12" cy="12" r="10" fill="#e6eef8" stroke="#777" strokeWidth="2" />
      <circle cx="12" cy="12" r="7.5" fill="none" stroke="#888" strokeDasharray="1 2.9" />
      <path d="M12 5 V12 H18" fill="none" stroke="#111" strokeWidth="1.6" />
    </g>
  ),
  palette: (
    <g>
      <rect x="2" y="2" width="8" height="5" fill="#ff3a20" />
      <rect x="2" y="6" width="8" height="3" fill="#ff9a14" />
      <rect x="2" y="8" width="8" height="3" fill="#ffe014" />
      <rect x="2" y="11" width="8" height="4" fill="#6ae420" />
      <rect x="2" y="14" width="8" height="4" fill="#14c8e8" />
      <rect x="2" y="18" width="8" height="5" fill="#1430e4" />
      <Wand />
    </g>
  ),
  studio: (
    <g>
      <path d="M3 2 H9 V19 H3Z" fill="#4c98dc" stroke="#3478bc" strokeDasharray="2 1" />
      <path d="M11 5 H24 M12 11 H22 L18 14" stroke="#3c6cd4" strokeWidth="1.6" fill="none" />
      <path d="M1 20 L11 18 M2 23 L6 17 L9 22" stroke="#e8c840" strokeWidth="1.6" fill="none" />
      <Wand />
    </g>
  ),
  tools: (
    <g>
      <path d="M9 4 L14 1 L22 4 M16 3 L10 14" stroke="#666" strokeWidth="2.2" fill="none" />
      <path d="M2 11 L7 15 Q10 13 13 18 L18 20" stroke="#8a90ac" strokeWidth="3.2" fill="none" />
      <path d="M2 22 Q3 16 8 18 V22Z" fill="#ffaa3c" />
    </g>
  ),
  album: (
    <g>
      <path d="M1 2 L6 4 V24 L1 20Z" fill="#f4f4f4" stroke="#555" />
      <rect x="7" y="2" width="16" height="19" fill="#fff" stroke="#444" strokeWidth="1.2" />
      <rect x="9" y="5" width="12" height="11" fill="#e8281c" />
      <path d="M11 5 H19 V12 L15 9 L11 12Z" fill="#4aa0f0" />
      <path d="M11 12 L15 9 L19 12 V16 H11Z" fill="#ffe9b8" />
    </g>
  ),

  /* tree */
  folder: (
    <g>
      <path d="M1 5 L4 2 H10 L12 5 H19 V10 H6 L2 20 H1Z" fill="#ffe27a" stroke="#a67c1c" />
      <path d="M7 10 H23 L19 21 H2Z" fill="#ffd03a" stroke="#a67c1c" strokeWidth="1.3" />
    </g>
  ),
  parts: (
    <g>
      <Cube x={1} y={0} s={12} />
      <Cube x={2} y={10} s={12} />
      <Cube x={11} y={9} s={14} />
    </g>
  ),
  part: <Cube x={0} y={0} s={23} p={{ ...GOLD, line: '#a87c1c' }} />,

  /* bottom bar */
  findPart: (
    <g>
      <g transform="scale(0.7)">
        <Binoculars />
      </g>
      <Cube x={6} y={9} s={16} h={14} p={{ ...GOLD, line: '#d0a840' }} />
    </g>
  ),
  context: (
    <g>
      <path d="M2 5 L8 1 L15 4 V9 L22 12 V19 L14 24 L2 19Z" fill="#dfe3f4" stroke="#5a62bc" />
      <Cube x={4} y={3} s={9} h={18} p={GREY} />
      <Cube x={11} y={12} s={9} p={GREY} />
    </g>
  ),
  windowParts: (
    <g>
      <rect x="2" y="3" width="20" height="19" fill="#f4f4f4" stroke="#b8b8b8" strokeWidth="1.5" />
      <rect x="2" y="3" width="20" height="3" fill="#b8b8b8" />
      <Cube x={6} y={8} s={7} h={11} p={PALE} />
      <Cube x={12} y={12} s={7} p={PALE} />
    </g>
  ),
  addPart: (
    <g>
      <Cube x={1} y={1} s={10} />
      <Cube x={1} y={12} s={10} />
      <Cube x={9} y={11} s={10} />
      <path d="M18 1 V9 M14 5 H22" stroke="#2b7ad8" strokeWidth="2" />
    </g>
  ),
  movePart: (
    <g>
      <Cube x={7} y={6} s={11} />
      <L d="M15 3 H19 V7 M18 1 H23 V6 M1 18 V22 H6 M3 15 V20 H8" c="#3a68c4" dash="2 1" w={1.2} />
    </g>
  ),
  mates: <Mates />,
  showConstraints: (
    <g>
      <path d="M1 5 L7 9 L1 13Z" fill="#2fb04a" />
      <path d="M2 12 L8 17 L2 22Z" fill="#e02828" />
      <L d="M18 1 V10 M13 10 H24 M13 22 L19 13 M17 22 L23 13" c="#a04a80" w={1.4} />
    </g>
  ),
  wrenchParts: (
    <g>
      <rect x="11" y="2" width="7" height="7" fill="#f2ec9a" stroke="#888" />
      <rect x="16" y="8" width="7" height="7" fill="#dde4c8" stroke="#888" />
      <rect x="9" y="8" width="7" height="7" fill="#eae89a" stroke="#888" />
      <path d="M2 21 L10 13 M8 10 L12 15" stroke="#b88c24" strokeWidth="4.5" />
      <path d="M2 21 L10 13 M8 10 L12 15" stroke="#f5d460" strokeWidth="3" />
    </g>
  ),
  threeParts: (
    <g>
      <Cube x={2} y={1} s={9} />
      <Cube x={2} y={13} s={9} />
      <Cube x={13} y={13} s={9} />
    </g>
  ),
  sequence: (
    <g fill="#fff" stroke={INK}>
      <rect x="13" y="2" width="6" height="6" />
      <rect x="9" y="8" width="6" height="6" />
      <rect x="4" y="15" width="6" height="6" fill="#ffee6a" stroke="#e03030" strokeWidth="1.3" />
    </g>
  ),
  taggedPart: (
    <g>
      <Cube x={2} y={1} s={21} p={{ ...GREY, side: '#9c9c9c' }} />
      <L d="M1 16 L11 13 L14 15 L12 20 L2 22Z" f="#ffdca8" c="#d89050" />
      <L d="M4 17 L10 16 M4 20 L10 18" c="#b88048" />
    </g>
  ),
  sketch: (
    <g>
      <L d="M1 2 L18 5 V23 L1 20Z M4 6 L9 7 V12 L4 11Z M4 14 L7 15 V19 L4 18Z M10 12 L15 13 V19 L10 18Z" f="#e4ece2" />
      <path d="M17 1 V11 M12 6 H23 M14 3 L20 9 M20 3 L14 9" stroke="#ecdc4c" strokeWidth="1.6" />
    </g>
  ),
  profileCurve: (
    <g>
      <L d="M2 2 V14 Q2 20 7 20 Q12 20 12 14 V11 Q12 7 16 7 Q21 7 21 12 V19" w={1.3} />
      <Dots at={[[2, 14], [12, 14], [21, 14]]} />
    </g>
  ),
  line: (
    <g>
      <L d="M3 21 L20 4" w={1.3} />
      <Dots at={[[3, 21], [20, 4]]} r={2.2} />
    </g>
  ),
  arc: (
    <g>
      <L d="M3 4 Q20 4 22 21" w={1.3} />
      <Dots at={[[3, 4], [16, 8], [22, 21]]} r={2.2} />
    </g>
  ),
  circle: <circle cx="12" cy="12" r="10" fill="none" stroke={INK} strokeWidth="1.3" />,
  fillet: (
    <g>
      <L d="M1 3 H12 Q21 3 21 12 V22" c={MUTE} w={1.3} />
      <L d="M12 2 H22 V12" c={MUTE} dash="1 1.5" />
    </g>
  ),
  chamferLine: (
    <g>
      <L d="M0 3 H12 L21 13 V23" c={MUTE} w={1.3} />
      <L d="M12 2 H22 V13" c={MUTE} dash="1 1.5" />
    </g>
  ),
  rectangle: (
    <g>
      <rect x="2" y="5" width="19" height="14" fill="none" stroke={INK} strokeWidth="1.3" />
      <Dots at={[[2, 5], [21, 19]]} r={2.2} />
    </g>
  ),
  spline: (
    <g>
      <L d="M2 13 L7 4 L8 10 Q11 13 15 14 L21 10 M15 21 L21 10 M2 13 Q4 10 8 11 M15 14 V21" c="#777" />
      <Dots at={[[2, 13], [7, 3], [15, 21], [21, 10]]} r={2} c="#8c8c8c" />
      <Dots at={[[7, 11], [15, 15]]} r={2} />
    </g>
  ),
  point: <L d="M12 3 V21 M3 12 H21" w={1.4} />,
  offset: (
    <g>
      <L d="M2 12 L7 5 H13 Q14 9 20 11 Q23 15 18 20 Q10 22 2 20Z" c="#a4a4a4" w={1.3} />
      <L d="M6 13 L9 9 H11 Q12 13 17 14 Q18 17 15 17 H6Z" c="#a4a4a4" w={1.3} />
    </g>
  ),
  quickTrim: (
    <g>
      <L d="M4 2 L14 22 M1 15 H12" c={MUTE} w={1.3} />
      <L d="M12 15 H22" c={MUTE} dash="1 1.5" />
      <path d="M12 12 L19 7 L21 9 L15 15Z" fill="#dcdcdc" stroke="#b4b4b4" />
    </g>
  ),
  quickExtend: (
    <g>
      <L d="M2 2 L13 22 M1 15 H11 M11 20 L20 4" c={MUTE} w={1.3} />
      <path d="M13 13 L20 2 L23 4 L16 15Z" fill="#dcdcdc" stroke="#b4b4b4" />
    </g>
  ),
  corner: (
    <g>
      <L d="M1 12 H14 L19 17 M14 12 V23 M8 6 L14 12" c={MUTE} w={1.3} />
      <L d="M14 2 V11 M15 12 H23" c={MUTE} dash="1 1.5" />
    </g>
  ),
  rapidDim: (
    <g>
      <L d="M1 8 V20 M23 8 V20 M2 14 H22 M5 12 L2 14 L5 16 M19 12 L22 14 L19 16" c={MUTE} w={1.3} />
      <path d="M12 3 L20 1 L14 8 H18 L8 18 L11 11 H7Z" fill="#e4e4e4" stroke="#b8b8b8" />
    </g>
  ),
  geomConstraint: <L d="M1 16 L9 8 M5 16 L13 8 M16 12 V21 M10 21 H23" c={MUTE} w={1.3} />,
  symmetric: (
    <g>
      <L d="M6 4 H2 V21 H6 V4 M18 4 H22 V21 H18 V4 M6 4 H10 M18 4 H14 M9 2 V7 M15 2 V7" c={MUTE} w={1.3} />
      <L d="M12 1 V23" c="#888" dash="3 2" />
    </g>
  ),
  showGeom: (
    <g>
      <path d="M1 8 L6 12 L1 16Z" fill="#b5b5b5" />
      <L d="M10 12 L18 2 M14 12 L22 2 M17 13 V23 M11 23 H23" c={MUTE} w={1.3} />
    </g>
  ),
  convert: (
    <g>
      <L d="M2 2 H12 V11 H2Z M11 13 H23 V22 H11Z" c="#999" w={1.3} />
      <L d="M1 16 H7 V23 H1Z M3 21 L6 18" c="#999" />
      <path d="M12 13 L19 5 L22 7 L15 15Z" fill="#dcdcdc" stroke="#b4b4b4" />
    </g>
  ),
  reattach: (
    <g>
      <L d="M11 4 Q3 -1 2 7 Q4 13 10 9 M8 9 H11 V5" c="#a4a4a4" w={1.3} />
      <path d="M8 13 L20 1 L23 4 L12 15Z" fill="#dcdcdc" stroke="#b4b4b4" />
      <Cube x={1} y={13} s={14} h={9} p={PALE} />
      <rect x="15" y="15" width="8" height="7" fill="#d4d4d4" stroke="#b4b4b4" />
    </g>
  ),
  updateModel: (
    <g>
      <L d="M12 4 Q4 -1 2 7 Q4 13 10 9 M8 9 H11 V5" c="#a4a4a4" w={1.3} />
      <path d="M4 16 L12 12 L24 17 L16 22Z" fill="#d5d5d5" stroke="#b4b4b4" />
      <Cube x={13} y={6} s={9} h={11} p={PALE} />
    </g>
  ),
};

/* what shows of the row scrolled under the window edge: 24 x 10 strips */
const strips = {
  globe: <path d="M2 0 Q7 8 18 4 L20 0 H14 Q10 5 6 0Z" fill="#2d9c3c" stroke="#e8d060" />,
  doc: <path d="M4 0 V2.5 H20 V0" fill="#e8edff" stroke="#6a7ecc" strokeWidth="1.3" />,
  folder: <path d="M3 0 V3 L16 3 L20 0Z" fill="#f0d774" stroke="#b89a3c" />,
  disk: <path d="M3 0 V2 H21 V0 H16 V2 H9 V0Z" fill="#3c56a2" stroke="#34498c" />,
  cut: <circle cx="12" cy="1" r="3" fill="none" stroke="#b4b4b4" strokeWidth="1.5" />,
  copy: <path d="M6 0 V3.5 H18 V0 M9 1 H15" fill="none" stroke="#b4b4b4" />,
  undo: <path d="M15 -2 L11 3" stroke="#4a82cc" strokeWidth="1.8" />,
  redo: <path d="M12 -2 L16 3" stroke="#bbb" strokeWidth="1.8" />,
  arrows: <path d="M4 0 L14 4 M5 4 V0" stroke="#c83030" strokeWidth="1.3" />,
  gem: <path d="M5 -1 L12 5 L19 -1Z" fill="#7488d0" stroke="#36447c" strokeWidth="1.3" />,
  box: <path d="M2 -1 V3 H22 V-1" fill="#e3ecff" stroke="#5a65bc" strokeWidth="1.3" />,
  oval: <path d="M5 -1 Q12 4 19 -1" fill="none" stroke="#888" strokeWidth="1.8" />,
  cube: <path d="M2 -1 L12 4 L22 -1Z" fill="#6c8cd8" stroke="#4a5aac" />,
  grey: <path d="M5 -1 L16 3.5 V-1" fill="#ddd" stroke="#b4b4b4" />,
  sheet: <path d="M5 -1 L20 3.5 V-1" fill="#c8dcf5" stroke="#8aa4c8" />,
  panel: <path d="M0 -1 V5 H23 V-1" fill="#ccc" stroke="#555" strokeWidth="1.3" />,
  solid: <path d="M8 -1 V4 L18 0 V-1" fill="#7a9ae4" stroke="#3c4c94" />,
  solidRed: <path d="M4 -1 L9 2 V4 L20 0 V-1" fill="#e47a5a" stroke="#3c4c94" />,
  list: <path d="M8 -1 V4 H20 V-1 M11 1 H17" fill="#e8efff" stroke="#6a7ecc" />,
  curl: <path d="M2 1 H10 L14 4" fill="none" stroke="#aaa" strokeWidth="1.3" />,
  key: <path d="M6 4 L11 -1 H18 L16 3" fill="none" stroke="#e0b848" strokeWidth="1.8" />,
  red: <path d="M5 2 L8 -1 M14 -1 L20 2" stroke="#d04848" strokeWidth="1.8" />,
  bluePin: <path d="M5 0 L10 2 L14 5" fill="none" stroke="#3c4ccc" strokeWidth="1.8" />,
  ruler: <path d="M1 -1 V4.5 H23 V-1 M4 3 V0 M8 3 V0 M12 3 V0 M16 3 V0 M20 3 V0" fill="#ffe890" stroke="#b89a3c" />,
};

/* ---------- chrome ---------- */

const Page = styled.div`
  height: 100vh;
  min-width: 1000px;
  display: flex;
  flex-direction: column;
  overflow: hidden;
  background: #fff;
`;

const ToolRow = styled.div`
  display: flex;
  flex: none;
  height: ${({ $height = 34 }) => $height}px;
  overflow: hidden;
  ${({ $ruled }) => $ruled && 'border-bottom: 1px solid #d9d9d9;'}
`;

const Toolbar = styled.div`
  display: flex;
  flex: none;
  align-items: center;
  border-right: 1px solid #d9d9d9;
  border-bottom: ${({ $open }) => ($open ? 'none' : '1px solid #d9d9d9')};
  ${({ $detached }) =>
    $detached && 'margin-left: 94px; border-left: 1px solid #d9d9d9;'}
`;

const Grip = styled.span`
  flex: none;
  align-self: stretch;
  width: ${({ $first }) => ($first ? 4 : 8)}px;
  margin: 4px 0;
  background: radial-gradient(circle at 2px 2px, #a2a2a2 1px, transparent 2px)
    ${({ $first }) => ($first ? 0 : 3)}px 0 / 4px 4px repeat-y;
`;

const Rule = styled.span`
  flex: none;
  width: 1px;
  height: 26px;
  margin: 0 2px 0 3px;
  background: #d9d9d9;
`;

const ToolButton = styled.button`
  flex: none;
  display: flex;
  align-items: center;
  justify-content: center;
  width: ${({ $width = 31 }) => $width}px;
  height: ${({ $height = 31 }) => $height}px;
  padding: 0;
  border: 1px solid transparent;
  background: none;
  ${({ $lit }) =>
    $lit && css`border-color: #f5cf6a; background: #fdf3d2;`}
  ${({ $on }) => $on && css`border-color: #a7bfbc; background: #c6d6d4;`}
`;

const DropButton = styled.button`
  flex: none;
  display: flex;
  align-items: ${({ $end }) => ($end ? 'flex-end' : 'center')};
  justify-content: center;
  width: ${({ $end, $narrow }) => ($end ? 13 : $narrow ? 11 : 12)}px;
  height: 24px;
  padding: 0 0 ${({ $end }) => ($end ? 4 : 0)}px;
  border: 0;
  background: none;
`;

const Caret = styled.span`
  flex: none;
  border: 3px solid transparent;
  border-top-color: #111;
  border-bottom: 0;
`;

const OverflowButton = styled.button`
  flex: none;
  display: flex;
  flex-direction: column;
  align-items: center;
  justify-content: space-between;
  width: 17px;
  height: 28px;
  margin-left: ${({ $gap = 11 }) => $gap}px;
  padding: 0 0 5px;
  border: 0;
  background: none;
  font: 700 14px/12px 'Liberation Sans', sans-serif;
`;

const Icon = ({ name, size = 24 }) => (
  <svg width={size} height={size} viewBox="0 0 24 24" overflow="visible" aria-hidden="true">
    {icons[name]}
  </svg>
);

const Items = ({ list, width, height, size, on = [] }) =>
  list.split(' ').map((name, i) => {
    if (name === '|') return <Rule key={i} />;
    if (name === 'v' || name === 'V') {
      return (
        <DropButton key={i} type="button" aria-label="More" $end={name === 'V'} $narrow={!!width}>
          <Caret />
        </DropButton>
      );
    }
    return (
      <ToolButton
        key={i}
        type="button"
        aria-label={name}
        $width={width}
        $height={height}
        $lit={name === 'tag'}
        $on={on.includes(name)}
      >
        <Icon name={name} size={size} />
      </ToolButton>
    );
  });

const Overflow = ({ gap }) => (
  <OverflowButton type="button" aria-label="Toolbar options" $gap={gap}>
    »
    <Caret />
  </OverflowButton>
);

/* ---------- clipped top row ---------- */

const StripSlot = styled.button`
  flex: none;
  display: flex;
  justify-content: center;
  width: ${({ $width }) => $width}px;
  height: 10px;
  padding: 0;
  border: 0;
  background: none;
`;

const StripEnd = styled.span`
  display: flex;
  flex: none;
  align-self: flex-start;
  padding: 0 5px;
`;

const FinderBox = styled.input`
  flex: none;
  width: 125px;
  height: 16px;
  margin: -12px 3px 0 6px;
  border: 1px solid #9a9a9a;
`;

const Strip = ({ name, width = 31 }) => (
  <StripSlot type="button" aria-label={name} $width={width}>
    <svg width="24" height="10" viewBox="0 0 24 10" aria-hidden="true">
      {strips[name]}
    </svg>
  </StripSlot>
);

const StripRun = ({ list }) =>
  list.map(([name, width], i) =>
    name === '|' ? <Rule key={i} /> : <Strip key={i} name={name} width={width} />,
  );

/* ---------- dimension text buttons ---------- */

const DimText = styled.span`
  display: flex;
  flex-direction: column;
  align-items: center;
  font: 400 ${({ $small }) => ($small ? 11 : 12)}px/11px Roboto, sans-serif;
  color: ${({ $color = '#333' }) => $color};
  ${({ $boxed }) => $boxed && `border: 1px solid ${RED}; padding: 1px 0;`}
`;

const Tolerance = styled.span`
  font: 500 9px/8px Roboto, sans-serif;
  color: ${({ $color = RED }) => $color};
`;

const Bracket = styled.span`
  display: flex;
  flex-direction: column;
  padding: 0 2px;
  border: solid ${NAVY};
  border-width: 0 1px;
  border-radius: 4px;
  font: 400 8px/7px Roboto, sans-serif;
`;

const Paren = styled.span`
  color: ${RED};
`;

const DimButton = ({ label, children, ...rest }) => (
  <ToolButton type="button" aria-label={label}>
    <DimText {...rest}>{children}</DimText>
  </ToolButton>
);

/* ---------- selection bar ---------- */

const SelectionBar = styled.div`
  display: flex;
  flex: none;
  align-items: center;
  height: 32px;
  padding-left: 1px;
  border-bottom: 1px solid #7d868e;
`;

const SelectWrap = styled.label`
  display: grid;
  flex: none;
  align-items: center;
  width: ${({ $width }) => $width}px;
  margin-right: ${({ $gap }) => $gap}px;
  > * { grid-area: 1 / 1; }
  ${Caret} {
    justify-self: end;
    margin-right: 5px;
    border-width: 4px 4px 0;
    pointer-events: none;
  }
`;

const Select = styled.select`
  appearance: none;
  width: 100%;
  height: 20px;
  padding: 0 16px 0 2px;
  border: 1px solid #9b9b9b;
  border-radius: 0;
  background: #fff;
  color: #111;
  font-size: 11px;
`;

/* ---------- side ---------- */

const Workspace = styled.main`
  display: flex;
  flex: 1;
  min-height: 0;
`;

const Rail = styled.nav`
  flex: none;
  width: 28px;
  background: #dcdcdc;
  border-right: 1px solid #b4b4b4;
`;

const RailButton = styled.button`
  display: flex;
  align-items: center;
  justify-content: center;
  width: 28px;
  height: ${({ $height = 42 }) => $height}px;
  margin-top: ${({ $spaced }) => ($spaced ? 12 : 0)}px;
  padding: 0 1px 0 0;
  border: 0;
  background: none;
  ${({ $active }) =>
    $active && css`background: #fff; border-top: 1px solid #b4b4b4; border-bottom: 1px solid #b4b4b4;`}
`;

const SettingsButton = styled(RailButton)`
  width: 24px;
  margin-bottom: 14px;
`;

const Panel = styled.aside`
  flex: none;
  display: flex;
  flex-direction: column;
  width: 167px;
  padding: 0 9px 6px 6px;
  background: #fff;
  border-right: 1px solid #7d868e;
`;

const PanelTitle = styled.header`
  display: flex;
  align-items: center;
  justify-content: space-between;
  height: 28px;
  padding: 2px 7px 0 4px;
`;

const MaxButton = styled.button`
  width: 12px;
  height: 11px;
  padding: 0;
  border: 1px solid #111;
  border-top-width: 2px;
  background: #fff;
`;

const TreeBox = styled.div`
  flex: 1;
  display: flex;
  flex-direction: column;
  min-height: 0;
  padding: 1px;
  border: 1px solid #d4d4d4;
`;

const TreeHead = styled.div`
  display: flex;
  flex: none;
  align-items: center;
  gap: 18px;
  height: 21px;
  padding-left: 6px;
  background: #efefef;
  border-bottom: 1px solid #dcdcdc;
`;

const SortMark = styled.span`
  border: 5px solid transparent;
  border-bottom-color: #111;
  border-top: 0;
`;

const Tree = styled.ul`
  flex: 1;
  min-height: 0;
  margin: 0;
  padding: 0;
  list-style: none;
  overflow: hidden;
`;

const TreeRow = styled.li`
  display: flex;
  align-items: center;
  height: 20px;
  padding-left: ${({ $indent = 5 }) => $indent}px;
  border-bottom: 1px solid #ececec;
  white-space: nowrap;
  overflow: hidden;
  &:nth-child(even) { background: #fafafa; }
`;

const Expander = styled.button`
  flex: none;
  width: 9px;
  height: 9px;
  padding: 0;
  border: 1px solid #c4c4c4;
  background:
    linear-gradient(#222, #222) center / 5px 1px no-repeat,
    linear-gradient(#222, #222) center / 1px ${({ $open }) => ($open ? 0 : 5)}px no-repeat,
    #fff;
`;

const Leader = styled.span`
  flex: none;
  width: ${({ $width = 4 }) => $width}px;
  margin: 0 2px 0 1px;
  border-top: 1px dotted #999;
`;

const Guide = styled.span`
  flex: none;
  align-self: ${({ $last }) => ($last ? 'flex-start' : 'stretch')};
  display: flex;
  align-items: ${({ $last }) => ($last ? 'flex-end' : 'center')};
  height: ${({ $last }) => ($last ? '10px' : 'auto')};
  border-left: 1px dotted #999;
`;

const CheckInput = styled.input`
  appearance: none;
  flex: none;
  display: grid;
  place-items: center;
  width: 12px;
  height: 12px;
  border: 1px solid #000;
  outline: 1px solid #00000022;
  background: #fff;
  &:checked::after {
    content: '✔';
    color: #e01018;
    font: 700 13px/10px 'DejaVu Sans', sans-serif;
  }
`;

const RowLabel = styled.label`
  display: flex;
  align-items: center;
  gap: ${({ $gap = 4 }) => $gap}px;
  margin-left: ${({ $tight }) => ($tight ? 1 : 3)}px;
  font-size: 12px;
  font-weight: ${({ $bold }) => ($bold ? 700 : 400)};
  svg { flex: none; }
`;

const ScrollTrack = styled.div`
  display: flex;
  flex: none;
  align-items: center;
  height: 16px;
  margin-bottom: 1px;
  background: #efefef;
`;

const ScrollArrow = styled.button`
  display: flex;
  justify-content: center;
  width: 17px;
  padding: 0;
  border: 0;
  background: none;
`;

const ScrollThumb = styled.span`
  width: 36px;
  height: 15px;
  margin-right: auto;
  background: #cbcbcb;
`;

const Splitter = styled.div`
  flex: none;
  height: 4px;
  background: #d4d4d4;
  border: 1px solid #b4b4b4;
`;

const Section = styled.button`
  display: flex;
  flex: none;
  align-items: center;
  justify-content: space-between;
  height: 24px;
  padding: 2px 5px 0 7px;
  border: 0;
  border-bottom: 2px solid #cecece;
  background: none;
  color: #2385bd;
  font-size: 14px;
`;

const Viewport = styled.section`
  flex: 1;
  min-width: 0;
  background: #d4d4d4;
  > svg { display: block; width: 100%; height: 100%; }
`;

const FinishButton = styled.button`
  flex: none;
  display: flex;
  align-items: center;
  gap: 4px;
  width: 78px;
  padding: 0 0 0 3px;
  border: 0;
  background: none;
  color: #bcbcbc;
  font-size: 11px;
  white-space: nowrap;
`;

const FlagBox = styled.span`
  display: flex;
  padding: 1px;
  border: 1px solid #c0c0c0;
  background: #e8e8e8;
`;

const StatusBar = styled.footer`
  display: flex;
  flex: none;
  justify-content: flex-end;
  gap: 5px;
  height: 15px;
  padding: 2px 36px 0 0;
  border-top: 1px solid #b0b0b0;
  overflow: hidden;
`;

/* ---------- navigator ---------- */

const components = [
  'zhufati',
  'Oxingmifeng',
  'zhufazuo',
  'zhufaxin',
  'zhufatanhuan',
  'youyongluos',
  'xiandaofati',
  'xiandaofazuo',
  'xiandaofaxin',
  'xiandaofatan',
  'tiaojiegan',
  'Oxingmifeng',
  'tiaoyaluom',
  'suojinluomu',
];

const Navigator = () => (
  <Panel>
    <PanelTitle>
      装配导航器
      <MaxButton type="button" aria-label="Maximize" />
    </PanelTitle>
    <TreeBox>
      <TreeHead>
        描述性部件名
        <SortMark />
      </TreeHead>
      <Tree>
        <TreeRow>
          <Expander type="button" aria-label="Expand" />
          <Leader />
          <CheckInput type="checkbox" id="sections" />
          <RowLabel htmlFor="sections" $tight>
            <Icon name="folder" size={16} />
            截面
          </RowLabel>
        </TreeRow>
        <TreeRow>
          <Expander type="button" aria-label="Collapse" $open />
          <Leader />
          <CheckInput type="checkbox" id="root-part" defaultChecked />
          <RowLabel htmlFor="root-part" $tight $bold>
            <Icon name="parts" size={16} />
            yiliufa（顺序：时
          </RowLabel>
        </TreeRow>
        <TreeRow $indent={24}>
          <Expander type="button" aria-label="Expand" />
          <Leader $width={2} />
          <RowLabel as="span" $tight $gap={3}>
            <Icon name="constraints" size={15} />
            约束
          </RowLabel>
        </TreeRow>
        {components.map((name, i) => (
          <TreeRow key={i} $indent={28}>
            <Guide $last={i === components.length - 1}>
              <Leader $width={8} />
            </Guide>
            <CheckInput type="checkbox" id={`part-${i}`} defaultChecked />
            <RowLabel htmlFor={`part-${i}`}>
              <Icon name="part" size={14} />
              {name}
            </RowLabel>
          </TreeRow>
        ))}
        {Array.from({ length: 7 }, (_, i) => (
          <TreeRow key={`blank-${i}`} />
        ))}
      </Tree>
      <ScrollTrack>
        <ScrollArrow type="button" aria-label="Scroll left">
          <svg width="6" height="8" viewBox="0 0 6 8"><L d="M5 0 L1 4 L5 8" w={1.8} /></svg>
        </ScrollArrow>
        <ScrollThumb />
        <ScrollArrow type="button" aria-label="Scroll right">
          <svg width="6" height="8" viewBox="0 0 6 8"><L d="M1 0 L5 4 L1 8" w={1.8} /></svg>
        </ScrollArrow>
      </ScrollTrack>
    </TreeBox>
    <Splitter />
    {['预览', '相依性'].map((title) => (
      <Section key={title} type="button">
        {title}
        <svg width="11" height="9" viewBox="0 0 11 9">
          <L d="M1 0 L5.5 7 L10 0" c="#2385bd" w={2} />
        </svg>
      </Section>
    ))}
  </Panel>
);

/* ---------- 3D scene ---------- */

const EDGE = '#3b3428';

const Face = ({ points, fill }) => (
  <polygon points={points} fill={fill} stroke={EDGE} strokeWidth="2.5" strokeLinejoin="round" />
);

const TopHole = ({ x, y }) => (
  <ellipse cx={x} cy={y} rx="39" ry="16" fill="url(#holeTop)" stroke={EDGE} strokeWidth="2.5" />
);

const SideHole = ({ x, y }) => (
  <g transform={`translate(${x} ${y}) rotate(-10)`} stroke={EDGE} strokeWidth="2">
    <ellipse rx="16" ry="40" fill="url(#holeSide)" />
    <path d="M2 -22 Q-5 0 9 22 M9 -20 Q3 0 12 18" fill="none" />
    <path d="M2 -22 Q14 -18 14 12 Q4 8 2 -22Z" fill="#c07800" />
  </g>
);

const Scene = () => (
  <svg viewBox="195 145 1015 595" role="img" aria-label="yiliufa">
    <defs>
      <linearGradient id="turned" gradientUnits="userSpaceOnUse" x1="165" y1="222" x2="205" y2="450">
        <stop offset="0" stopColor="#ffb400" />
        <stop offset="0.22" stopColor="#ffd000" />
        <stop offset="0.38" stopColor="#fff83c" />
        <stop offset="0.6" stopColor="#ff9c00" />
        <stop offset="0.85" stopColor="#b86c00" />
        <stop offset="1" stopColor="#a86200" />
      </linearGradient>
      <linearGradient id="holeTop">
        <stop offset="0" stopColor="#a86400" />
        <stop offset="1" stopColor="#d88400" />
      </linearGradient>
      <linearGradient id="holeSide" x1="0" y1="0" x2="0" y2="1">
        <stop offset="0" stopColor="#9a5c00" />
        <stop offset="0.45" stopColor="#f09400" />
        <stop offset="1" stopColor="#ffec30" />
      </linearGradient>
    </defs>

    <g transform="translate(500 285) scale(0.3333)">
      <Face fill="#ffc000" points="270,440 293,435 293,458" />
      <Face fill="#b06a00" points="288,122 436,234 440,467 443,572 467,590 475,1057 277,908 270,440 293,458" />
      <Face fill="#ffc000" points="288,122 712,36 859,148 436,234" />
      <Face fill="#ffc000" points="864,305 944,365 864,381" />
      <Face fill="#c87800" points="436,234 859,148 864,381 440,467" />
      <Face fill="#c87800" points="440,467 944,365 946,470 443,572" />
      <Face fill="#ffc000" points="443,572 946,470 971,488 467,590" />
      <Face fill="#c87800" points="467,590 971,488 980,956 475,1057" />
      <path d="M338 391 L440 467" stroke={EDGE} strokeWidth="2.5" />

      <TopHole x={362} y={130} />
      <TopHole x={685} y={64} />
      <TopHole x={785} y={140} />
      <TopHole x={461} y={205} />
      <SideHole x={298} y={565} />
      <SideHole x={441} y={674} />
      <SideHole x={299} y={821} />
      <SideHole x={449} y={936} />

      <g stroke={EDGE} strokeWidth="2.5" fill="url(#turned)">
        <path d="M325 240 L345 230 C375 232 391 270 391 310 C391 345 380 362 365 364 L340 360Z" />
        <path
          d="M340 234 C368 255 378 325 362 363 M350 232 C378 255 388 325 371 362 M334 238 C358 260 366 320 354 360 M360 233 C384 260 390 330 376 361"
          fill="none"
          strokeWidth="3"
        />
        <path d="M175 242 L300 217 C335 228 350 290 350 345 C350 378 342 390 330 393 L205 418Z" />
        <path d="M243 230 C275 250 300 340 285 403 M254 227 C284 250 308 335 294 401" fill="none" />
        <path d="M248 229 C280 250 304 338 290 402" fill="none" strokeWidth="1.5" />
        <path d="M72 233 L145 220 C178 226 213 290 215 362 C215 418 205 448 183 452 L112 465 C70 450 37 380 37 315 C37 270 48 240 72 233Z" />
        <path d="M145 220 C172 232 206 290 209 362 C211 405 204 436 196 446" fill="none" />
        <path d="M72 233 C112 238 146 300 146 375 C146 430 134 460 112 465" fill="none" />
        <ellipse cx="85" cy="354" rx="44" ry="109" fill="#ad6700" transform="rotate(-10 85 354)" />
      </g>
    </g>

    <g transform="translate(0 530) scale(0.3333)" fill="none" strokeWidth="3">
      <path
        d="M740 415 L790 404 L818 424 L818 480 L768 492 L740 470Z M740 415 L766 436 L818 424 M766 436 L768 492 M790 404 V462 L740 470 M790 462 L818 480"
        stroke="#adadad"
      />
      <path d="M750 468 L815 456" stroke="#9fc09f" strokeWidth="5" />
      <path d="M805 451 L830 454 L806 461Z" fill="#8cb88c" stroke="none" />
      <path d="M735 468 V400" stroke="#1030c8" strokeWidth="8" />
      <path d="M735 378 L743 402 H727Z" fill="#1030c8" stroke="none" />
      <path d="M742 476 L772 496" stroke="#cc2222" strokeWidth="7" />
      <path d="M790 508 L762 498 L770 488Z" fill="#cc2222" stroke="none" />
      <circle cx="735" cy="473" r="12" fill="#bdbdbd" stroke="#888" />
      <g stroke="none" fontFamily="Liberation Sans, sans-serif" fontSize="33" textAnchor="middle">
        <text x="735" y="374" fill="#2244e8">Z</text>
        <text x="843" y="463" fill="#3a9a3a">Y</text>
        <text x="789" y="524" fill="#cc2222">X</text>
      </g>
    </g>
  </svg>
);

/* ---------- app ---------- */

const railItems = [
  { name: 'assembly', height: 44, active: true },
  { name: 'constraints' },
  { name: 'partNav' },
  { name: 'reuse' },
  { name: 'info', spaced: true },
  { name: 'webPage', spaced: true },
  { name: 'clock', spaced: true },
  { name: 'palette' },
  { name: 'studio' },
  { name: 'tools' },
  { name: 'album' },
];

const snapOn = ['snapAll', 'snapEnd', 'snapMid', 'snapPoly', 'snapCenter', 'snapPoint', 'snapOn'];

const App = () => (
  <Page>
    <GlobalStyle />
    <ToolRow $height={11} $ruled>
      <Toolbar $open>
        <StripRun
          list={[
            ['globe', 35], ['', 33], ['doc', 31], ['folder', 31], ['disk', 32], ['|'],
            ['cut', 31], ['copy', 35], ['copy', 28], ['|'], ['undo', 40], ['redo', 34], ['|'],
            ['arrows', 43], ['|'], ['gem', 34],
          ]}
        />
        <FinderBox aria-label="Command finder" />
        <StripEnd><Caret /></StripEnd>
      </Toolbar>
      <Toolbar $open>
        <Grip />
        <StripRun
          list={[
            ['box', 31], ['oval', 51], ['cube', 40], ['grey', 38], ['sheet', 36], ['panel', 46],
            ['|'], ['solid', 28], ['solidRed', 34],
          ]}
        />
        <StripEnd><Caret /></StripEnd>
      </Toolbar>
      <Toolbar $open>
        <Grip />
        <StripRun
          list={[
            ['list', 28], ['curl', 42], ['|'], ['gem', 28], ['key', 38], ['|'], ['red', 24], ['', 20],
            ['|'], ['bluePin', 24], ['', 18], ['ruler', 34],
          ]}
        />
        <Caret />
      </Toolbar>
    </ToolRow>

    <ToolRow $ruled>
      <Toolbar $open>
        <Grip $first />
        <Items list="plane v extrude revolve block emboss sheet shell | offsetFace pattern geometryPattern unite combine v replaceFace trimSheet splitBody wave copyFace | edgeBlend faceBlend chamfer" />
        <Overflow gap={18} />
      </Toolbar>
      <Toolbar $open>
        <Grip />
        <Items list="moveFace v resizeBlend v deleteFace copyCube v groupFace v linearDim v" />
        <Overflow />
      </Toolbar>
      <Toolbar $open>
        <Grip />
        <Items list="surf1 surf2 surf3 mesh curveLink crossSurf quilt v" />
      </Toolbar>
    </ToolRow>

    <ToolRow>
      <Toolbar>
        <Grip $first />
        <Items list="selGroup layers layersList | tag | checkBlue checkSketch checkBody | abc V" />
      </Toolbar>
      <Toolbar>
        <Grip />
        <Items list="bridge1 bridge2 pointList V" />
      </Toolbar>
      <Toolbar>
        <Grip />
        <Items list="coil tension wheel | cutCoil V" />
      </Toolbar>
      <Toolbar $detached>
        <Grip />
        <Items list="triangle tableTri folderPts folderRings noteBox brushDim |" />
        <DimButton label="Find tolerance" $small>
          <svg width="22" height="12" viewBox="0 0 24 13" aria-hidden="true">
            <Binoculars />
          </svg>
          <span>10<Paren>H7</Paren></span>
        </DimButton>
        <Items list="V" />
      </Toolbar>
      <Toolbar>
        <Grip />
        <Items list="locks1 locks2 V" />
      </Toolbar>
    </ToolRow>

    <ToolRow>
      <Toolbar>
        <Grip $first />
        <Items list="pmiCheck pmiTree pmiTable csys V" />
      </Toolbar>
      <Toolbar>
        <Grip />
        <Items list="profile |" />
        <DimButton label="No tolerance">1.00</DimButton>
        <DimButton label="Equal bilateral">
          1.00<Tolerance>±.05</Tolerance>
        </DimButton>
        <DimButton label="Bilateral">
          1.00<Tolerance>+.05</Tolerance><Tolerance>−.02</Tolerance>
        </DimButton>
        <DimButton label="Unilateral plus">
          1.00<Tolerance>+.05</Tolerance><Tolerance $color="#888">−.00</Tolerance>
        </DimButton>
        <DimButton label="Unilateral minus">
          1.00<Tolerance $color="#888">+.00</Tolerance><Tolerance>−.02</Tolerance>
        </DimButton>
        <DimButton label="Basic" $boxed $small>1.00</DimButton>
        <DimButton label="Reference" $small>
          <span><Paren>(</Paren>1.00<Paren>)</Paren></span>
        </DimButton>
        <DimButton label="Fit" $color={NAVY} $small>10H7</DimButton>
        <DimButton label="Fit with limits" $color={NAVY} $small>
          10H7<Bracket><span>10.01</span><span>10</span></Bracket>
        </DimButton>
        <DimButton label="Fit with deviation" $color={NAVY} $small>
          10H7<Bracket><span>0.015</span><span>0</span></Bracket>
        </DimButton>
        <DimButton label="Deviation" $color={NAVY} $small>
          10<Bracket><span>0.015</span><span>0</span></Bracket>
        </DimButton>
        <Items list="| radius1 radius2 | dia1 dia2 back V" />
      </Toolbar>
    </ToolRow>

    <SelectionBar>
      <SelectWrap $width={132} $gap={8}>
        <Select aria-label="选择过滤器">
          <option>没有选择过滤器</option>
        </Select>
        <Caret />
      </SelectWrap>
      <SelectWrap $width={140} $gap={3}>
        <Select aria-label="选择范围">
          <option>整个装配</option>
        </Select>
        <Caret />
      </SelectWrap>
      <Items
        width={23}
        height={22}
        size={17}
        on={snapOn}
        list="selCube | filterBack filterBox v targetBack treeBack | marquee v | shadeTop glass | snapAll snapEnd snapMid snapCurve snapPoly snapCross snapCenter snapQuad snapPoint snapOn snapFace | grid"
      />
    </SelectionBar>

    <Workspace>
      <Rail>
        <SettingsButton type="button" aria-label="Settings" $height={26}>
          <Icon name="gear" size={18} />
        </SettingsButton>
        {railItems.map(({ name, height, active, spaced }) => (
          <RailButton
            key={name}
            type="button"
            aria-label={name}
            $height={height}
            $active={active}
            $spaced={spaced}
          >
            <Icon name={name} />
          </RailButton>
        ))}
      </Rail>
      <Navigator />
      <Viewport>
        <Scene />
      </Viewport>
    </Workspace>

    <ToolRow>
      <Toolbar $open>
        <Grip $first />
        <Items list="findPart v context windowParts addPart v movePart mates showConstraints | wrenchParts threeParts sequence | taggedPart" />
        <Overflow gap={19} />
      </Toolbar>
      <Toolbar $open>
        <Grip />
        <Items list="sketch" />
        <FinishButton type="button" disabled>
          <FlagBox>
            <svg width="20" height="20" viewBox="0 0 24 24" aria-hidden="true">
              <Flag />
            </svg>
          </FlagBox>
          完成草图
        </FinishButton>
        <Items list="profileCurve line arc circle fillet chamferLine rectangle spline point offset v | quickTrim quickExtend corner | rapidDim v | geomConstraint symmetric showGeom v | convert reattach updateModel" />
      </Toolbar>
    </ToolRow>

    <StatusBar>
      <svg width="16" height="16" viewBox="0 0 24 24" aria-hidden="true">
        <rect width="24" height="24" fill="#dcdcdc" stroke="#bbb" />
        <Flag />
      </svg>
      <svg width="16" height="16" viewBox="0 0 16 16" aria-hidden="true">
        <L d="M1 4 V1 H4 M12 1 H15 V4" c="#666" />
        <rect x="3.5" y="4.5" width="9" height="9" fill="#fff" stroke="#333" />
        <rect x="5" y="7" width="6" height="5" fill="#3c78d4" />
      </svg>
    </StatusBar>
  </Page>
);

export default App;
